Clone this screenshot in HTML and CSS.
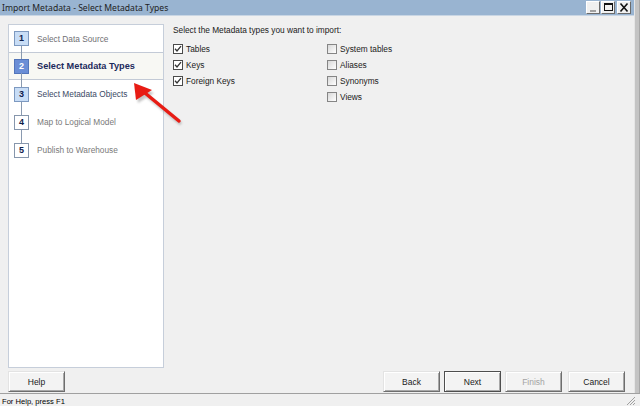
FILE: index.html
```html
<!DOCTYPE html>
<html lang="en">
<head>
    <meta charset="UTF-8">
    <title>Import Metadata - Select Metadata Types</title>
    <link rel="stylesheet" href="styles.css">
</head>
<body>
    <div class="frame">
        <div class="window">
            <!-- TITLE BAR -->
            <div class="titlebar">
                <span class="title">Import Metadata - Select Metadata Types</span>
                <div class="caption-buttons">
                    <span class="cap-btn">
                        <svg width="12" height="11" viewBox="0 0 12 11"><rect x="3" y="8" width="6" height="2" fill="#a0a0a0"/></svg>
                    </span>
                    <span class="cap-btn">
                        <svg width="12" height="11" viewBox="0 0 12 11"><rect x="2.5" y="1.5" width="8" height="7" fill="none" stroke="#111" stroke-width="1"/><rect x="2" y="1" width="9" height="2" fill="#111"/></svg>
                    </span>
                    <span class="cap-btn cap-close">
                        <svg width="12" height="11" viewBox="0 0 12 11"><path d="M2.5 1.5 L9.5 9.5 M9.5 1.5 L2.5 9.5" stroke="#111" stroke-width="1.6"/></svg>
                    </span>
                </div>
            </div>

            <!-- WIZARD -->
            <div class="wizard">
                <div class="steps">
                    <div class="step step-first">
                        <div class="track"><span class="line"></span><span class="num num-done">1</span><span class="line"></span></div>
                        <span class="label label-done">Select Data Source</span>
                    </div>
                    <div class="step step-current">
                        <div class="track"><span class="line"></span><span class="num num-current">2</span><span class="line"></span></div>
                        <span class="label label-current">Select Metadata Types</span>
                    </div>
                    <div class="step">
                        <div class="track"><span class="line"></span><span class="num num-done">3</span><span class="line"></span></div>
                        <span class="label label-next">Select Metadata Objects</span>
                    </div>
                    <div class="step">
                        <div class="track"><span class="line"></span><span class="num">4</span><span class="line"></span></div>
                        <span class="label">Map to Logical Model</span>
                    </div>
                    <div class="step step-last">
                        <div class="track"><span class="line"></span><span class="num">5</span><span class="line"></span></div>
                        <span class="label">Publish to Warehouse</span>
                    </div>
                </div>

                <div class="content">
                    <div class="prompt">Select the Metadata types you want to import:</div>
                    <div class="options">
                        <label class="option"><span class="box checked"><svg width="8" height="8" viewBox="0 0 8 8"><path d="M1 3.8 L3 6 L7 1.2" fill="none" stroke="#333" stroke-width="1.3"/></svg></span>Tables</label>
                        <label class="option"><span class="box"></span>System tables</label>
                        <label class="option"><span class="box checked"><svg width="8" height="8" viewBox="0 0 8 8"><path d="M1 3.8 L3 6 L7 1.2" fill="none" stroke="#333" stroke-width="1.3"/></svg></span>Keys</label>
                        <label class="option"><span class="box"></span>Aliases</label>
                        <label class="option"><span class="box checked"><svg width="8" height="8" viewBox="0 0 8 8"><path d="M1 3.8 L3 6 L7 1.2" fill="none" stroke="#333" stroke-width="1.3"/></svg></span>Foreign Keys</label>
                        <label class="option"><span class="box"></span>Synonyms</label>
                        <span></span>
                        <label class="option"><span class="box"></span>Views</label>
                    </div>
                </div>
            </div>

            <!-- BUTTONS -->
            <div class="actions">
                <button class="btn">Help</button>
                <div class="nav">
                    <button class="btn">Back</button>
                    <button class="btn btn-default">Next</button>
                    <button class="btn btn-disabled">Finish</button>
                    <button class="btn btn-cancel">Cancel</button>
                </div>
            </div>
        </div>
        <div class="edge"></div>
    </div>

    <!-- STATUS BAR -->
    <div class="statusbar">
        <span class="status-text">For Help, press F1</span>
        <svg class="grip" width="11" height="11" viewBox="0 0 11 11">
            <path d="M10 2 L2 10 M10 5 L5 10 M10 8 L8 10" stroke="#a0a0a0" stroke-width="1"/>
        </svg>
    </div>

    <!-- ANNOTATION ARROW -->
    <svg class="arrow" width="640" height="406" viewBox="0 0 640 406">
        <defs>
            <filter id="soft"><feGaussianBlur stdDeviation="1"/></filter>
        </defs>
        <g fill="#808080" stroke="#808080" opacity="0.45" filter="url(#soft)" transform="translate(2 3)">
            <path d="M145 93 L179 121" stroke-width="3.5"/>
            <polygon points="134,83 136,100 152,90" stroke="none"/>
        </g>
        <g fill="#e81c14" stroke="#e81c14">
            <path d="M145 93 L179 121" stroke-width="3.5" stroke-linecap="round"/>
            <polygon points="134,83 136,100 152,90" stroke="none"/>
        </g>
    </svg>
</body>
</html>
```

FILE: styles.css
```css
/* GENERAL */
body {
    margin: 0;
    width: 640px;
    height: 406px;
    overflow: hidden;
    background-color: #f0f0f0;
    font-family: "Liberation Sans", Arial, sans-serif;
    font-size: 8.3px;
    color: #1a1a1a;
    position: relative;
}

.frame {
    display: flex;
    height: 393px;
}

.window {
    width: 634px;
    display: flex;
    flex-direction: column;
}

.edge {
    width: 4px;
    background-color: #c4c4c4;
    border-left: 1px solid #e6e6e6;
    border-right: 1px solid #a8a8a8;
}

/* TITLE BAR */
.titlebar {
    height: 15px;
    background-color: #99b4d1;
    border-bottom: 1px solid #c9d6e4;
    display: flex;
    align-items: center;
    justify-content: space-between;
    padding-left: 2px;
}

.title {
    font-family: "Noto Sans", "Open Sans", sans-serif;
    font-size: 8.6px;
    color: #1e1e1e;
}

.caption-buttons {
    display: flex;
    gap: 1px;
    margin-right: 3px;
    align-self: flex-start;
    margin-top: 1px;
}

.cap-btn {
    width: 12px;
    height: 11px;
    background-color: #f0f0f0;
    border: 1px solid;
    border-color: #ffffff #6b6b6b #6b6b6b #ffffff;
    display: flex;
}

.cap-close {
    margin-left: 1px;
}

/* WIZARD */
.wizard {
    flex: 1;
    display: flex;
    padding-top: 8px;
}

.steps {
    width: 154px;
    height: 342px;
    margin-left: 8px;
    background-color: #ffffff;
    border: 1px solid #c6ceda;
}

.step {
    height: 28px;
    box-sizing: border-box;
    display: flex;
    align-items: stretch;
}

.step-first {
    height: 27px;
}

.step-current {
    background-color: #f8f8f4;
    border-top: 1px solid #c3cad6;
    border-bottom: 1px solid #c3cad6;
}

.track {
    width: 15px;
    margin-left: 5px;
    display: flex;
    flex-direction: column;
    align-items: center;
}

.line {
    flex: 1;
    width: 1px;
    background-color: #8a9ab0;
}

.step-current .line {
    margin: -1px 0;
}

.step-first .track .line:first-child,
.step-last .track .line:last-child {
    visibility: hidden;
}

.num {
    width: 13px;
    height: 13px;
    flex: none;
    border: 1px solid #8696ac;
    background-color: #ffffff;
    color: #10204a;
    font-weight: bold;
    font-size: 9px;
    line-height: 13px;
    text-align: center;
}

.num-done {
    background-color: #c8ddf6;
    border-color: #7d99c0;
}

.num-current {
    background-color: #6b8ed6;
    border-color: #5375ba;
    color: #ffffff;
}

.label {
    margin-left: 8px;
    align-self: center;
    color: #7a7a7a;
    white-space: nowrap;
}

.label-done {
    color: #707074;
}

.label-current {
    color: #1c2a5c;
    font-weight: bold;
    font-size: 9.2px;
}

.label-next {
    color: #3c4a66;
}

/* CONTENT */
.content {
    margin-left: 9px;
    flex: 1;
}

.prompt {
    line-height: 12px;
}

.options {
    display: grid;
    grid-template-columns: 154px 1fr;
    grid-auto-rows: 16px;
    margin-top: 5px;
}

.option {
    display: flex;
    align-items: center;
    white-space: nowrap;
}

.box {
    width: 8px;
    height: 8px;
    margin-right: 3px;
    border: 1px solid #858585;
    background: linear-gradient(135deg, #d8d8d8, #ffffff);
    display: flex;
    align-items: center;
    justify-content: center;
}

.box.checked {
    border-color: #4a4a4a;
    background: #ffffff;
}

/* BUTTONS */
.actions {
    display: flex;
    justify-content: space-between;
    padding: 3px 9px 0 8px;
    height: 25px;
    box-sizing: border-box;
}

.nav {
    display: flex;
    gap: 4px;
}

.btn {
    width: 57px;
    height: 21px;
    padding: 0;
    font-family: "Liberation Sans", Arial, sans-serif;
    font-size: 8.5px;
    color: #1a1a1a;
    background-color: #f3f3f3;
    border: 1px solid;
    border-color: #e3e3e3 #6e6e6e #6e6e6e #e3e3e3;
    box-shadow: inset 1px 1px 0 #ffffff, inset -1px -1px 0 #a8a8a8;
}

.btn-default {
    border-color: #4e4e4e;
}

.btn-disabled {
    color: #a3a3a3;
}

.btn-cancel {
    margin-left: 2px;
}

/* STATUS BAR */
.statusbar {
    height: 12px;
    border-top: 1px solid #a0a0a0;
    padding-left: 2px;
    display: flex;
    justify-content: space-between;
    align-items: flex-end;
    color: #000000;
}

.status-text {
    font-size: 7.6px;
    line-height: 10px;
    margin-bottom: -1px;
}

.grip {
    margin-right: 4px;
}

/* ANNOTATION */
.arrow {
    position: absolute;
    left: 0;
    top: 0;
    pointer-events: none;
}
```
